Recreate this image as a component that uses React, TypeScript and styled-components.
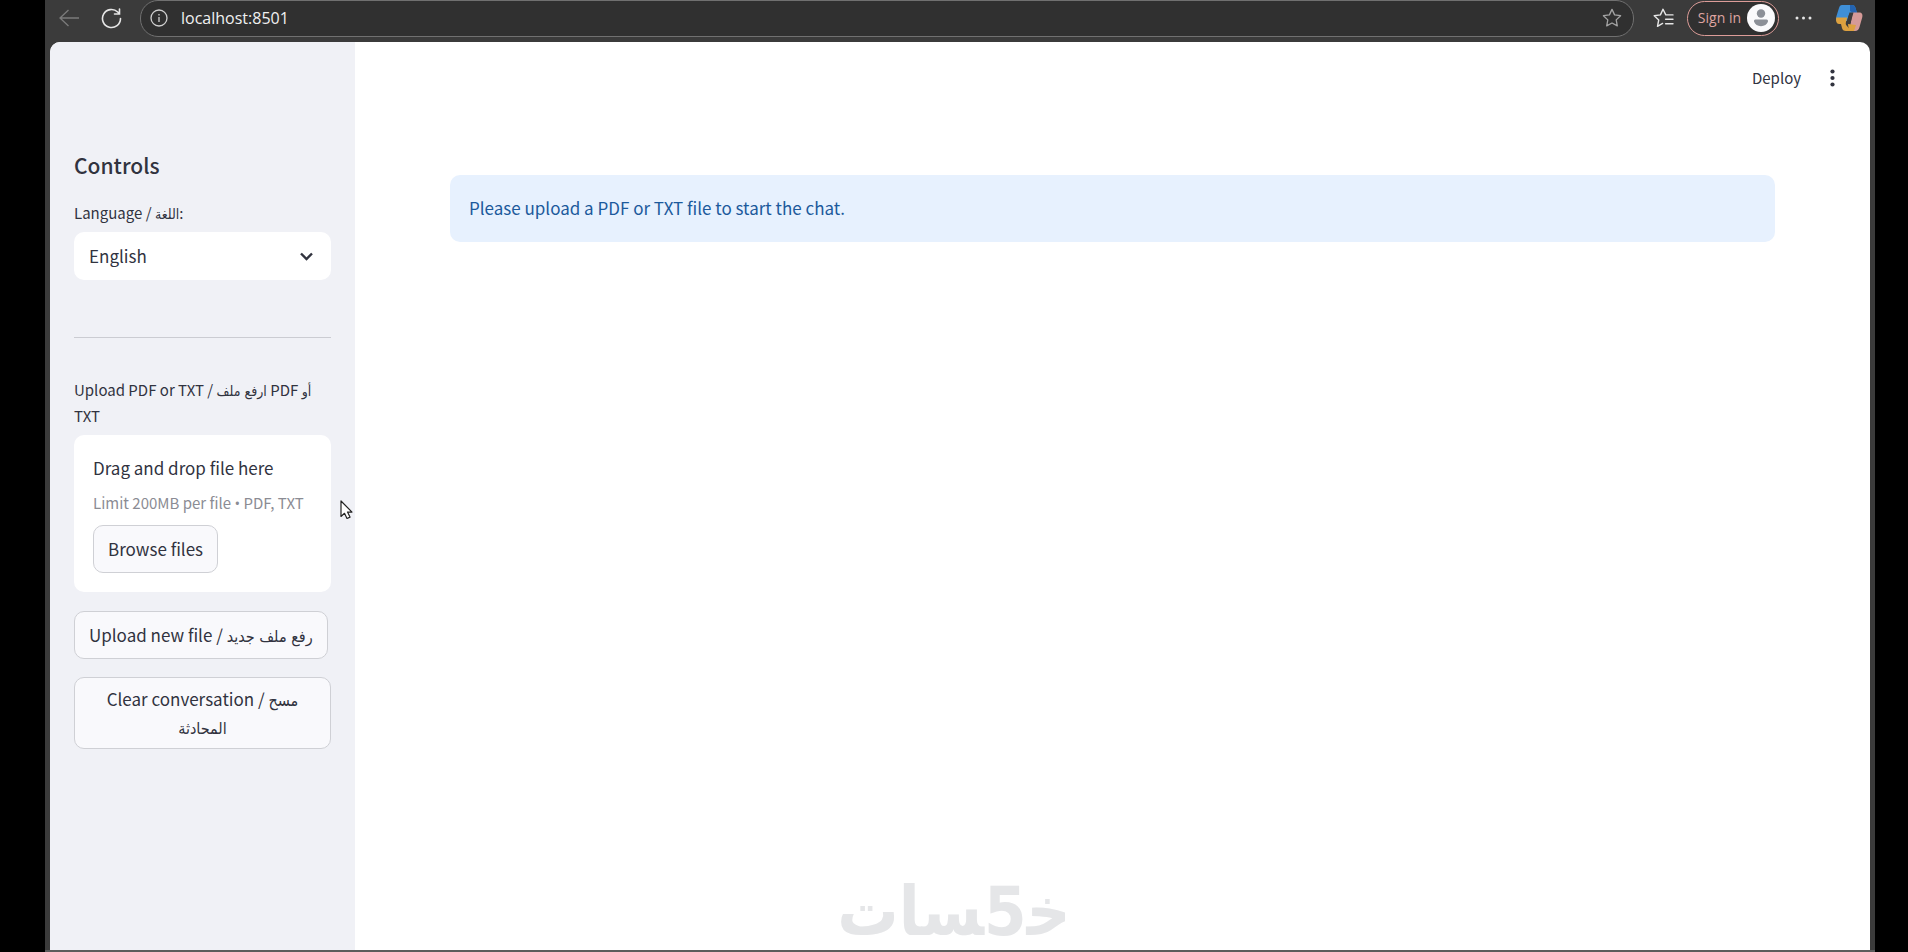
import React, { useRef } from "react";
import styled, { createGlobalStyle, css } from "styled-components";

const sans = `"Noto Sans CJK SC", "DejaVu Sans", sans-serif`;
const arabicFont = `"DejaVu Sans Condensed", "DejaVu Sans", sans-serif`;
const chromeFont = `"Open Sans", "Noto Sans", sans-serif`;

const GlobalStyle = createGlobalStyle`
  *, *::before, *::after { box-sizing: border-box; }
  body { margin: 0; background: #000; color: #31333f; font-family: ${sans}; font-size: 17px; line-height: 28px; }
  button, input, select { font: inherit; color: inherit; }
  svg { display: block; }
`;

const Window = styled.div`
  position: relative;
  display: flex;
  flex-direction: column;
  min-height: 100vh;
  margin: 0 33px 0 45px;
  padding: 0 5px;
  background: #3b3b3b;
  border-bottom: 2px solid #5c5c5c;
`;

const BrowserBar = styled.header`
  display: flex;
  align-items: center;
  height: 42px;
  padding: 0 7px 6px 8px;
  color: #e6e6e6;
  font-family: ${chromeFont};
`;

const ChromeButton = styled.button<{ $gap?: number; $faded?: boolean }>`
  display: flex;
  flex: none;
  padding: 0;
  border: 0;
  background: none;
  margin-left: ${(p) => p.$gap ?? 0}px;
  color: ${(p) => (p.$faded ? "#7b7b7b" : "#e6e6e6")};
`;

const AddressBar = styled.div`
  display: flex;
  flex: 1;
  align-items: center;
  gap: 13px;
  height: 37px;
  margin-left: 18px;
  padding: 0 11px 0 9px;
  border: 1px solid #707070;
  border-radius: 18px;
  background: #303030;
`;

const AddressInput = styled.input`
  flex: 1;
  min-width: 0;
  padding: 0;
  border: 0;
  outline: 0;
  background: none;
  color: #f0f0f0;
  font-size: 16px;
  line-height: 24px;
`;

const SignIn = styled.button`
  display: flex;
  flex: none;
  align-items: center;
  gap: 6px;
  height: 35px;
  margin-left: 13px;
  padding: 0 3px 0 10px;
  border: 1px solid #dc9c98;
  border-radius: 18px;
  background: #303030;
  color: #dfa5a1;
  font-size: 14px;
`;

const Page = styled.div`
  display: flex;
  flex: 1;
  overflow: hidden;
  border-radius: 10px 10px 0 0;
  background: #fff;
`;

const Sidebar = styled.aside`
  display: flex;
  flex: none;
  flex-direction: column;
  align-items: flex-start;
  width: 305px;
  padding: 108px 24px 24px;
  background: #f0f1f6;
`;

const Heading = styled.h2`
  margin: 0 0 20px;
  font-size: 21px;
  line-height: 30px;
  font-weight: 500;
`;

const Label = styled.label`
  margin-bottom: 6px;
  font-size: 15px;
  line-height: 26px;
`;

const Arabic = styled.span<{ $small?: boolean }>`
  font-family: ${arabicFont};
  font-size: ${(p) => (p.$small ? 14 : 16)}px;
  line-height: 1;
`;

const SelectWrap = styled.div`
  display: grid;
  align-items: center;
  width: 100%;
  > * { grid-area: 1 / 1; }
  > svg { justify-self: end; margin-right: 18px; pointer-events: none; }
`;

const Select = styled.select`
  appearance: none;
  width: 100%;
  height: 48px;
  padding: 0 15px;
  border: 0;
  border-radius: 10px;
  background: #fff;
`;

const Divider = styled.hr`
  width: 100%;
  margin: 57px 0 39px;
  border: 0;
  border-top: 1px solid #cbccd2;
`;

const DropZone = styled.section`
  display: flex;
  flex-direction: column;
  align-items: flex-start;
  width: 100%;
  margin-bottom: 19px;
  padding: 19px;
  border-radius: 10px;
  background: #fff;
`;

const DropTitle = styled.span`
  margin-bottom: 8px;
`;

const DropHint = styled.small`
  margin-bottom: 9px;
  color: #8b8c94;
  font-size: 15px;
  line-height: 26px;
  white-space: nowrap;
`;

const Bullet = styled.span`
  font-family: "Open Sans", sans-serif;
  line-height: 1;
`;

const HiddenFile = styled.input`
  display: none;
`;

const Button = styled.button<{ $spaced?: boolean }>`
  min-height: 48px;
  max-width: 100%;
  padding: 7px 14px;
  border: 1px solid #cfd0d5;
  border-radius: 10px;
  background: #f9f9fc;
  ${(p) => p.$spaced && css`margin-bottom: 18px;`}
`;

const Main = styled.main`
  display: flex;
  flex: 1;
  flex-direction: column;
  min-width: 0;
`;

const AppToolbar = styled.div`
  display: flex;
  justify-content: flex-end;
  align-items: center;
  gap: 27px;
  height: 72px;
  padding: 0 33px 0 0;
`;

const ToolButton = styled.button`
  display: flex;
  padding: 0;
  border: 0;
  background: none;
  font-size: 15px;
`;

const Notice = styled.div`
  margin: 61px 95px 0;
  padding: 19px 19px 20px;
  border-radius: 10px;
  background: #e7f1fe;
  color: #1c5a9c;
`;

const Watermark = styled.div`
  position: fixed;
  right: 0;
  bottom: 0;
  left: 0;
  pointer-events: none;
  text-align: center;
  color: #e5e6e8;
  font-family: ${arabicFont};
  font-size: 68px;
  font-weight: 700;
  line-height: 80px;
`;

const Pointer = styled.svg`
  position: absolute;
  top: 500px;
  left: 295px;
`;

function BackIcon() {
  return (
    <svg width="21" height="18" viewBox="0 0 21 18" fill="none" stroke="currentColor" strokeWidth="1.3">
      <path d="M20 9H1M9.500 1 1 9l8.500 8" />
    </svg>
  );
}

function ReloadIcon() {
  return (
    <svg width="21" height="21" viewBox="0 0 21 21" fill="none" stroke="currentColor" strokeWidth="1.600" strokeLinecap="round">
      <path d="M19.500 10.500A9 9 0 1 1 16.700 4L18.500 5.800M18.500 1v5h-5" />
    </svg>
  );
}

function InfoIcon() {
  return (
    <svg width="18" height="18" viewBox="0 0 18 18" fill="none" stroke="#d0d0d0" strokeWidth="1.300">
      <circle cx="9" cy="9" r="8" />
      <path d="M9 8v5M9 5v1.600" />
    </svg>
  );
}

function StarIcon() {
  return (
    <svg width="20" height="20" viewBox="0 0 20 20" fill="none" stroke="#a4a4a4" strokeWidth="1.300" strokeLinejoin="round">
      <path d="m10 1.400 2.600 5.500 6 .8-4.400 4.200 1.100 6-5.300-2.900-5.300 2.900 1.100-6L1.400 7.700l6-.8z" />
    </svg>
  );
}

function FavoritesIcon() {
  return (
    <svg width="21" height="20" viewBox="0 0 21 20" fill="none" stroke="currentColor" strokeWidth="1.400" strokeLinejoin="round" strokeLinecap="round">
      <path d="M20 6.900h-7.200L10 1.200 7.400 6.900l-6.200.8 4.500 4.300-1.200 6.300 5.100-2.900M12.600 11.300H20M12.600 15.800H20" />
    </svg>
  );
}

function Avatar() {
  return (
    <svg width="28" height="28" viewBox="0 0 28 28">
      <circle cx="14" cy="14" r="14" fill="#fafafc" />
      <circle cx="14" cy="9.500" r="4.200" fill="#8c9098" />
      <path d="M8.500 15.500h11c1.300 0 1.800 1 1.400 2.300-.8 2.800-3.500 4.400-6.900 4.400s-6.100-1.600-6.900-4.400c-.4-1.300.1-2.300 1.400-2.300z" fill="#8c9098" />
    </svg>
  );
}

function MoreIcon() {
  return (
    <svg width="17" height="4" viewBox="0 0 17 4" fill="currentColor">
      <circle cx="2" cy="2" r="1.500" />
      <circle cx="8.500" cy="2" r="1.500" />
      <circle cx="15" cy="2" r="1.500" />
    </svg>
  );
}

function CopilotIcon() {
  return (
    <svg width="28" height="28" viewBox="0 0 28 28">
      <path d="M7 1h10c2 0 3 1 3.500 3L22 9h-5c-2 0-3 1-3.500 3L12 17H1.500C1 15 1 14 1.500 12L4 4c.5-2 1.500-3 3-3z" fill="#3f8fd6" />
      <path d="M15 1h2c2 0 3 1 3.500 3L22 9h-4l-3-2z" fill="#2363b0" />
      <path d="M1.300 13.500h11L11 18c-.6 2 0 3 1 4l4 5H11c-2.500 0-3.500-1-4-3l-1-4H4c-2.500 0-3.500-3-2.700-6.500z" fill="#dda13f" />
      <path d="M17.500 8.500H24c3 0 4 2 3.200 5L24.500 23c-.7 2.500-2 4-4.500 4H11c2.500 0 3.500-1.500 4-3.500z" fill="#d59a98" />
      <path d="m13 20 8 1-2 6h-9c2 0 3-1 3.500-3z" fill="#dda13f" />
      <path d="M14.500 8.500h4L15.500 19h-4z" fill="#3b3b3b" />
    </svg>
  );
}

function ChevronIcon() {
  return (
    <svg width="13" height="9" viewBox="0 0 13 9" fill="none" stroke="#31333f" strokeWidth="2.400">
      <path d="m1 1.500 5.500 5.500L12 1.500" />
    </svg>
  );
}

function KebabIcon() {
  return (
    <svg width="9" height="18" viewBox="0 0 9 18" fill="#31333f">
      <circle cx="4.500" cy="2.500" r="2.100" />
      <circle cx="4.500" cy="9" r="2.100" />
      <circle cx="4.500" cy="15.500" r="2.100" />
    </svg>
  );
}

export default function App() {
  const fileInput = useRef<HTMLInputElement>(null);
  return (
    <>
      <GlobalStyle />
      <Window>
        <BrowserBar>
          <ChromeButton aria-label="Back" $gap={1} $faded><BackIcon /></ChromeButton>
          <ChromeButton aria-label="Refresh" $gap={21}><ReloadIcon /></ChromeButton>
          <AddressBar>
            <InfoIcon />
            <AddressInput aria-label="Address" defaultValue="localhost:8501" />
            <ChromeButton aria-label="Add to favorites"><StarIcon /></ChromeButton>
          </AddressBar>
          <ChromeButton aria-label="Favorites" $gap={19}><FavoritesIcon /></ChromeButton>
          <SignIn>Sign in<Avatar /></SignIn>
          <ChromeButton aria-label="Settings and more" $gap={16}><MoreIcon /></ChromeButton>
          <ChromeButton aria-label="Copilot" $gap={23}><CopilotIcon /></ChromeButton>
        </BrowserBar>
        <Page>
          <Sidebar>
            <Heading>Controls</Heading>
            <Label htmlFor="language">Language / <Arabic $small>اللغة</Arabic>:</Label>
            <SelectWrap>
              <Select id="language" defaultValue="English">
                <option>English</option>
                <option>العربية</option>
              </Select>
              <ChevronIcon />
            </SelectWrap>
            <Divider />
            <Label htmlFor="document">
              Upload PDF or TXT / <Arabic $small>ارفع ملف</Arabic> PDF <Arabic $small>أو</Arabic> TXT
            </Label>
            <DropZone>
              <DropTitle>Drag and drop file here</DropTitle>
              <DropHint>Limit 200MB per file <Bullet>•</Bullet> PDF, TXT</DropHint>
              <HiddenFile id="document" ref={fileInput} type="file" accept=".pdf,.txt" />
              <Button onClick={() => fileInput.current?.click()}>Browse files</Button>
            </DropZone>
            <Button $spaced>Upload new file / <Arabic>رفع ملف جديد</Arabic></Button>
            <Button>Clear conversation / <Arabic>مسح</Arabic> <Arabic>المحادثة</Arabic></Button>
          </Sidebar>
          <Main>
            <AppToolbar>
              <ToolButton>Deploy</ToolButton>
              <ToolButton aria-label="Main menu"><KebabIcon /></ToolButton>
            </AppToolbar>
            <Notice role="status">Please upload a PDF or TXT file to start the chat.</Notice>
          </Main>
        </Page>
        <Watermark dir="rtl" lang="ar">خ&zwj;5&zwj;سات</Watermark>
        <Pointer width="14" height="20" viewBox="0 0 14 20" fill="#fff" stroke="#222" strokeWidth="1.200" strokeLinejoin="round">
          <path d="M1 1v15.500l3.500-3.200 2.500 5.200 3-1.400-2.500-5H12z" />
        </Pointer>
      </Window>
    </>
  );
}
